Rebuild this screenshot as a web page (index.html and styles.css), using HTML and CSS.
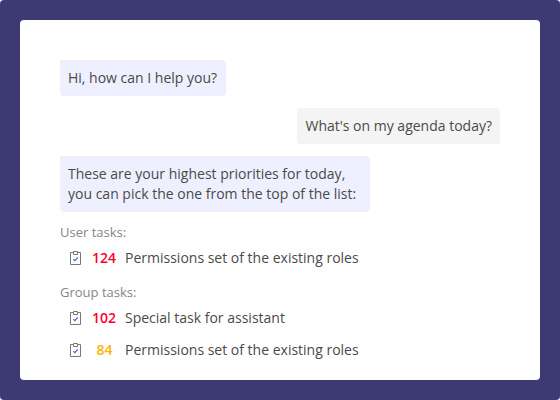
FILE: index.html
```html
<!DOCTYPE html>
<html lang="en">
<head>
<meta charset="utf-8">
<title>Assistant</title>
<link rel="stylesheet" href="styles.css">
</head>
<body>
<svg class="defs" aria-hidden="true"><symbol id="task" viewBox="0 0 14 16"><path d="M5 2.500H2.500v12h10v-12H10" fill="none" stroke="#77777c"/><path d="M5.500 1.500h4v3h-4z" fill="none" stroke="#77777c"/><path d="M5.300 9.200l1.500 1.500 3-3.200" fill="none" stroke="#4765ee" stroke-width="1.200"/></symbol></svg>
<main class="frame">
<section class="chat">
<p class="bubble">Hi, how can I help you?</p>
<p class="bubble user">What's on my agenda today?</p>
<p class="bubble wide">These are your highest priorities for today,<br>you can pick the one from the top of the list:</p>
<h2 class="heading">User tasks:</h2>
<ul class="tasks">
<li class="task"><svg class="icon"><use href="#task"/></svg><b class="score">124</b><span>Permissions set of the existing roles</span></li>
</ul>
<h2 class="heading">Group tasks:</h2>
<ul class="tasks">
<li class="task"><svg class="icon"><use href="#task"/></svg><b class="score">102</b><span>Special task for assistant</span></li>
<li class="task"><svg class="icon"><use href="#task"/></svg><b class="score medium">84</b><span>Permissions set of the existing roles</span></li>
</ul>
</section>
</main>
</body>
</html>
```
FILE: styles.css
```css
* { box-sizing: border-box; }
body { margin: 0; background: #fff; font: 14px/20px "Open Sans", sans-serif; color: #4a4a4a; }
.defs { display: none; }
.frame { height: 400px; padding: 20px; background: #3d3a73; border-radius: 4px; }
.chat { display: flex; flex-direction: column; align-items: flex-start; height: 360px; padding: 40px; background: #fff; border-radius: 4px; }
.bubble { min-width: 166px; margin: 0 0 12px; padding: 8px; background: #eef0ff; border-radius: 0 4px 4px 4px; white-space: nowrap; }
.user { align-self: flex-end; background: #f4f4f4; border-radius: 4px 4px 0 4px; }
.wide { width: 310px; margin-bottom: 10px; }
.heading { margin: 0; font-size: 13px; font-weight: 400; line-height: 20px; color: #868686; }
.tasks { margin: 0 0 8px; padding: 0; list-style: none; }
.task { display: flex; align-items: center; height: 32px; padding-left: 8px; white-space: nowrap; }
.icon { width: 14px; height: 16px; }
.score { width: 43px; padding-left: 1px; text-align: center; font-weight: 600; color: #ff002f; }
.medium { padding-left: 2px; color: #ffb300; }
```
